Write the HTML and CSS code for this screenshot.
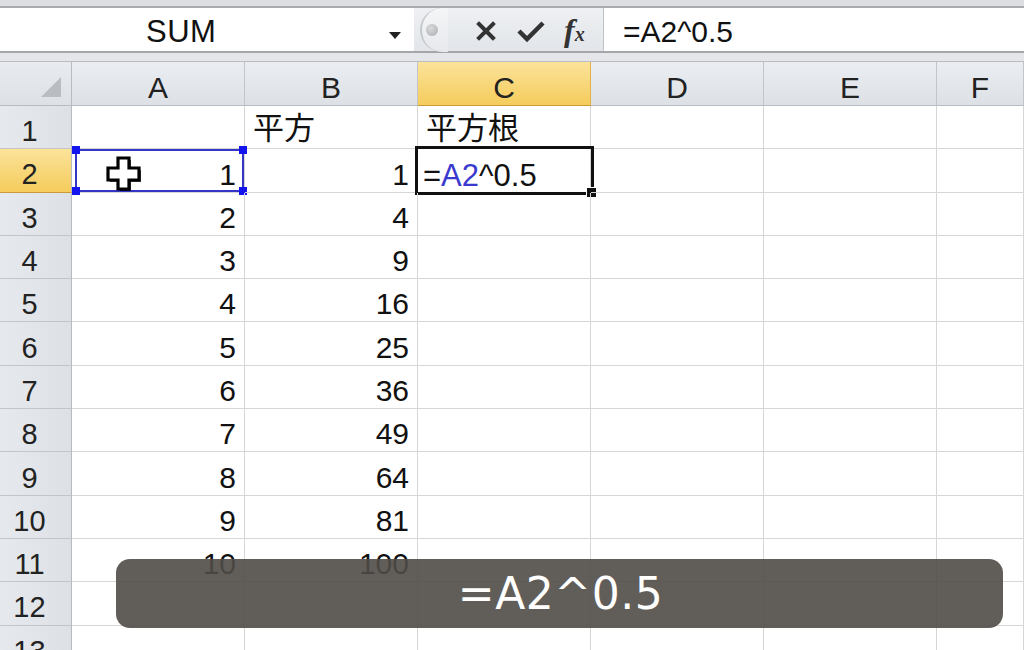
FILE: index.html
```html
<!DOCTYPE html>
<html>
<head>
<meta charset="utf-8">
<link rel="stylesheet" href="styles.css">
</head>
<body>
<div class="app">
  <div class="topstrip"></div>
  <div class="fbar">
    <div class="namebox">
      <span class="name">SUM</span>
      <span class="dd"></span>
    </div>
    <div class="btns">
      <span class="grip"><span class="dot"></span></span>
      <svg class="ico" width="24" height="24" viewBox="0 0 24 24"><path d="M5 5 L19 19 M19 5 L5 19" stroke="#333" stroke-width="4" stroke-linecap="square"/></svg>
      <svg class="ico" width="30" height="24" viewBox="0 0 30 24"><path d="M3 12 L11 20 L27 4" stroke="#333" stroke-width="4.5" fill="none"/></svg>
      <span class="fx">f<small>x</small></span>
    </div>
    <div class="finput">=A2^0.5</div>
  </div>
  <div class="gap"></div>
  <div class="grid">
    <div class="corner"><span class="tri"></span></div>
    <div class="ch">A</div><div class="ch">B</div><div class="ch sel">C</div><div class="ch">D</div><div class="ch">E</div><div class="ch">F</div>

    <div class="rh">1</div><div class="c"></div><div class="c txt">平方</div><div class="c txt">平方根</div><div class="c"></div><div class="c"></div><div class="c"></div>

    <div class="rh sel">2</div>
    <div class="c num ref">1<span class="refbox"><i class="h tl"></i><i class="h tr"></i><i class="h bl"></i><i class="h br"></i></span>
      <svg class="cursor" width="40" height="38" viewBox="0 0 40 38"><path d="M14 3 H25 V13 H35 V25 H25 V34 H14 V25 H4 V13 H14 Z" fill="#000" transform="translate(2 2)" opacity="0.7"/><path d="M14 3 H25 V13 H35 V25 H25 V34 H14 V25 H4 V13 H14 Z" fill="#fff" stroke="#000" stroke-width="3.2" stroke-linejoin="miter"/></svg>
    </div>
    <div class="c num">1</div>
    <div class="c txt active"><span class="f">=<span class="blue">A2</span>^0.5</span><span class="abox"></span><span class="handle"></span></div>
    <div class="c"></div><div class="c"></div><div class="c"></div>

    <div class="rh">3</div><div class="c num">2</div><div class="c num">4</div><div class="c"></div><div class="c"></div><div class="c"></div><div class="c"></div>
    <div class="rh">4</div><div class="c num">3</div><div class="c num">9</div><div class="c"></div><div class="c"></div><div class="c"></div><div class="c"></div>
    <div class="rh">5</div><div class="c num">4</div><div class="c num">16</div><div class="c"></div><div class="c"></div><div class="c"></div><div class="c"></div>
    <div class="rh">6</div><div class="c num">5</div><div class="c num">25</div><div class="c"></div><div class="c"></div><div class="c"></div><div class="c"></div>
    <div class="rh">7</div><div class="c num">6</div><div class="c num">36</div><div class="c"></div><div class="c"></div><div class="c"></div><div class="c"></div>
    <div class="rh">8</div><div class="c num">7</div><div class="c num">49</div><div class="c"></div><div class="c"></div><div class="c"></div><div class="c"></div>
    <div class="rh">9</div><div class="c num">8</div><div class="c num">64</div><div class="c"></div><div class="c"></div><div class="c"></div><div class="c"></div>
    <div class="rh">10</div><div class="c num">9</div><div class="c num">81</div><div class="c"></div><div class="c"></div><div class="c"></div><div class="c"></div>
    <div class="rh">11</div><div class="c num">10</div><div class="c num">100</div><div class="c"></div><div class="c"></div><div class="c"></div><div class="c"></div>
    <div class="rh">12</div><div class="c"></div><div class="c"></div><div class="c"></div><div class="c"></div><div class="c"></div><div class="c"></div>
    <div class="rh">13</div><div class="c"></div><div class="c"></div><div class="c"></div><div class="c"></div><div class="c"></div><div class="c"></div>
  </div>
  <div class="caption">=A2^0.5</div>
</div>
</body>
</html>
```
FILE: styles.css
```css
* { box-sizing: border-box; }
html, body { margin: 0; padding: 0; }
body { width: 1024px; height: 650px; overflow: hidden; background: #fff; font-family: "Liberation Sans", "Noto Sans CJK JP", sans-serif; color: #111; }
.app { position: relative; width: 1024px; height: 650px; overflow: hidden; }
.topstrip { height: 8px; background: #dcdee1; border-bottom: 2px solid #a9abae; }
.fbar { height: 45px; display: flex; background: #fff; border-bottom: 2px solid #a4a6a9; }
.namebox { width: 414px; display: flex; align-items: center; position: relative; padding-left: 146px; padding-top: 4px; }
.name { font-size: 31px; letter-spacing: 0.5px; color: #111; }
.dd { position: absolute; left: 389px; top: 24px; width: 0; height: 0; border-left: 6px solid transparent; border-right: 6px solid transparent; border-top: 7px solid #222; }
.btns { width: 190px; display: flex; align-items: center; gap: 18px; background: linear-gradient(#eef0f3, #e2e5e9); border-right: 1px solid #bfc2c6; padding-right: 12px; padding-top: 2px; }
.grip { width: 28px; height: 44px; border-radius: 22px 0 0 22px; border-left: 2px solid #c4c7cb; background: linear-gradient(#f5f6f8, #e6e8eb); display: flex; align-items: center; padding-left: 4px; margin-left: 6px; margin-right: 8px; margin-top: -2px; }
.dot { width: 12px; height: 12px; border-radius: 50%; background: radial-gradient(circle at 40% 35%, #d8dadc, #a9abae); }
.ico { display: block; }
.fx { font-family: "Liberation Serif", serif; font-style: italic; font-weight: bold; font-size: 32px; color: #333; }
.fx small { font-size: 20px; }
.finput { flex: 1; display: flex; align-items: center; padding-left: 19px; padding-top: 4px; font-size: 30px; color: #111; }
.gap { height: 9px; background: #e4e6e9; border-bottom: 1px solid #b9bcc0; }
.grid { display: grid; grid-template-columns: 72px repeat(5, 173px) 1fr; grid-template-rows: 44px repeat(13, 43.3px); }
.corner { background: linear-gradient(#e8ebef, #dde1e6); border-right: 1px solid #b8bcc2; border-bottom: 1px solid #b8bcc2; position: relative; }
.tri { position: absolute; right: 10px; bottom: 8px; width: 0; height: 0; border-left: 20px solid transparent; border-bottom: 20px solid #b9bcc0; }
.ch { background: linear-gradient(#eaedf1, #dde1e6); border-right: 1px solid #c2c6cb; border-bottom: 1px solid #b8bcc2; display: flex; align-items: center; justify-content: center; font-size: 30px; color: #222; padding-top: 9px; }
.ch.sel { background: linear-gradient(#fbe39a, #f5cc5c); border-right-color: #e2b247; border-bottom-color: #c89a3a; }
.rh { background: linear-gradient(90deg, #e6e9ed, #dde1e6); border-right: 1px solid #b8bcc2; border-bottom: 1px solid #c2c6cb; display: flex; align-items: center; justify-content: center; padding-right: 12px; padding-top: 9px; font-size: 29px; color: #222; }
.rh.sel { background: linear-gradient(#fbe39a, #f5cc5c); border-bottom-color: #c89a3a; }
.c { border-right: 1px solid #d6d6d6; border-bottom: 1px solid #d6d6d6; display: flex; align-items: flex-end; padding-bottom: 0px; font-size: 30px; color: #111; position: relative; }
.c.num { justify-content: flex-end; padding-right: 8px; }
.c.txt { padding-left: 8px; font-size: 31px; padding-bottom: 0px; }
.blue { color: #3a3acf; }
.active .f { font-size: 31px; position: relative; left: -3px; top: 2px; }
.abox { position: absolute; left: -3px; top: -3px; right: -4px; bottom: -3px; border: 3px solid #111; }
.handle { position: absolute; right: -7px; bottom: -6px; width: 11px; height: 11px; background: #111; border: 1px solid #fff; }
.refbox { position: absolute; left: 3px; top: 0px; right: 0px; bottom: 0px; border: 2px solid #3535c8; }
.h { position: absolute; width: 8px; height: 8px; background: #1414ee; }
.h.tl { left: -5px; top: -5px; }
.h.tr { right: -5px; top: -5px; }
.h.bl { left: -5px; bottom: -5px; }
.h.br { right: -5px; bottom: -5px; }
.cursor { position: absolute; left: 32px; top: 6px; }
.caption { position: absolute; left: 116px; top: 559px; width: 887px; height: 69px; border-radius: 14px; background: rgba(80, 76, 72, 0.9); color: #fff; font-family: "DejaVu Sans", sans-serif; font-size: 44px; display: flex; align-items: center; justify-content: center; letter-spacing: 0.5px; padding-left: 2px; }
```
